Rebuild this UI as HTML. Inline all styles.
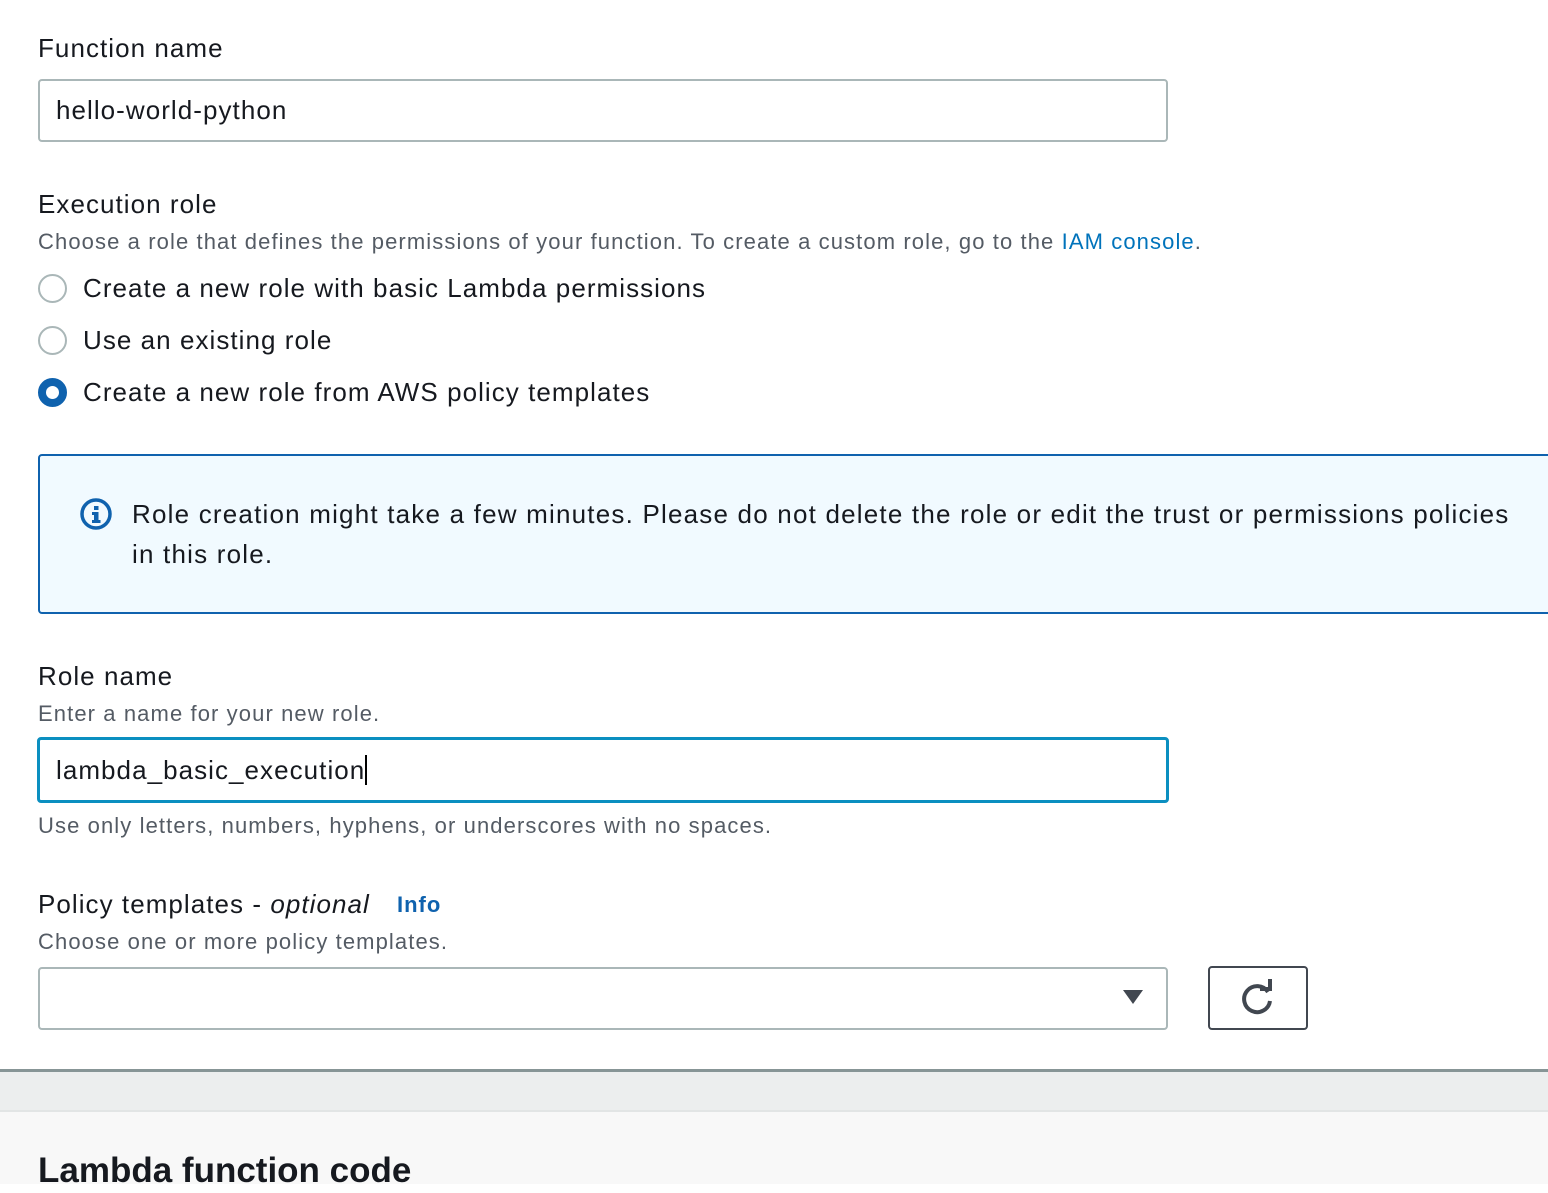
<!DOCTYPE html>
<html><head><meta charset="utf-8"><style>
*{margin:0;padding:0;box-sizing:border-box}
body{width:1548px;height:1184px;overflow:hidden;background:#fff;font-family:"Liberation Sans",sans-serif;color:#16191f;position:relative}
.a{position:absolute;white-space:nowrap}
.lbl{font-size:26px;line-height:32px;letter-spacing:1.05px}
.desc{font-size:22px;line-height:28px;color:#545b64;letter-spacing:1.1px}
.inp{position:absolute;left:38px;width:1130px;height:63px;border:2px solid #aab7b8;border-radius:4px;background:#fff}
.radio{position:absolute;left:38px;width:29px;height:29px;border-radius:50%;border:2px solid #aab7b8;background:#fff}
</style></head><body>
<div class="a lbl" style="left:38px;top:32px">Function name</div>
<div class="inp" style="top:79px"></div>
<div class="a lbl" style="left:56px;top:94px">hello-world-python</div>

<div class="a lbl" style="left:38px;top:188px">Execution role</div>
<div class="a desc" style="left:38px;top:228px">Choose a role that defines the permissions of your function. To create a custom role, go to the <span style="color:#0073bb">IAM console</span>.</div>
<div class="radio" style="top:274px"></div>
<div class="a lbl" style="left:83px;top:272px">Create a new role with basic Lambda permissions</div>
<div class="radio" style="top:326px"></div>
<div class="a lbl" style="left:83px;top:324px">Use an existing role</div>
<div class="radio" style="top:378px;border:8px solid #0f62ae"></div>
<div class="a lbl" style="left:83px;top:376px">Create a new role from AWS policy templates</div>

<div style="position:absolute;left:38px;top:454px;width:1530px;height:160px;border:2px solid #0f62ae;border-radius:4px;background:#f1faff"></div>
<svg class="a" style="left:79px;top:497px" width="34" height="34" viewBox="0 0 34 34"><circle cx="17" cy="17" r="14" fill="none" stroke="#0f62ae" stroke-width="3.5"/><rect x="15" y="9" width="4.5" height="4" fill="#0f62ae"/><path d="M13 15h6.5v8h2v3h-8.5v-3h2v-5h-2z" fill="#0f62ae"/></svg>
<div class="a lbl" style="left:132px;top:498px;letter-spacing:1.2px">Role creation might take a few minutes. Please do not delete the role or edit the trust or permissions policies</div>
<div class="a lbl" style="left:132px;top:538px;letter-spacing:1.2px">in this role.</div>

<div class="a lbl" style="left:38px;top:660px">Role name</div>
<div class="a desc" style="left:38px;top:700px">Enter a name for your new role.</div>
<div class="inp" style="top:737px;left:37px;width:1132px;height:66px;border:3px solid #0b8fc0"></div>
<div class="a lbl" style="left:56px;top:754px">lambda_basic_execution<span style="display:inline-block;width:2px;height:30px;background:#000;vertical-align:-6px"></span></div>
<div class="a desc" style="left:38px;top:812px">Use only letters, numbers, hyphens, or underscores with no spaces.</div>

<div class="a lbl" style="left:38px;top:888px">Policy templates - <i>optional</i></div>
<div class="a" style="left:397px;top:891px;font-size:22px;line-height:28px;font-weight:bold;color:#0f62ae;letter-spacing:1px">Info</div>
<div class="a desc" style="left:38px;top:928px">Choose one or more policy templates.</div>
<div class="inp" style="top:967px"></div>
<svg class="a" style="left:1122px;top:989px" width="22" height="16"><path d="M1 1h20l-10 14z" fill="#414750"/></svg>
<div style="position:absolute;left:1208px;top:966px;width:100px;height:64px;border:2px solid #414750;border-radius:4px"></div>
<svg class="a" style="left:1238px;top:979px" width="40" height="40" viewBox="0 0 40 40"><path d="M30 13A13 13 0 1 0 32 22" fill="none" stroke="#414750" stroke-width="4"/><path d="M22 10h10V0" fill="none" stroke="#414750" stroke-width="4"/></svg>

<div style="position:absolute;left:0;top:1069px;width:1548px;height:3px;background:#879596"></div>
<div style="position:absolute;left:0;top:1072px;width:1548px;height:39px;background:#eceeee"></div>
<div style="position:absolute;left:0;top:1110px;width:1548px;height:2px;background:#e2e5e5"></div>
<div style="position:absolute;left:0;top:1112px;width:1548px;height:72px;background:#f8f8f8"></div>
<div class="a" style="left:38px;top:1149px;font-size:35px;line-height:44px;font-weight:bold">Lambda function code</div>
</body></html>
